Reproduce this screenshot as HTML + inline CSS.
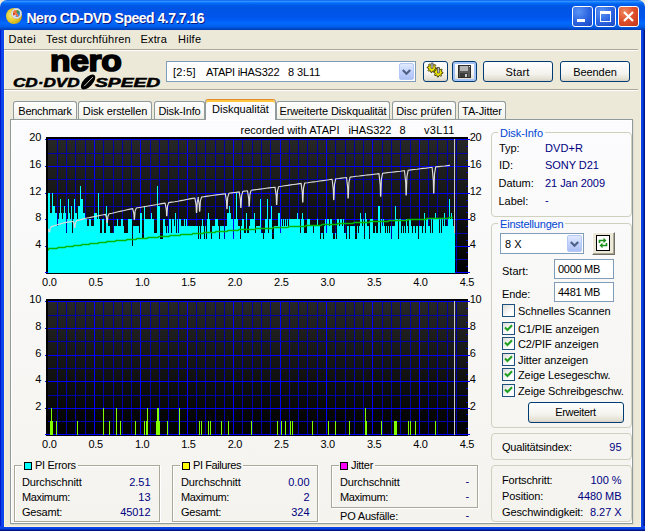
<!DOCTYPE html>
<html><head><meta charset="utf-8"><title>Nero CD-DVD Speed 4.7.7.16</title>
<style>
*{box-sizing:border-box;margin:0;padding:0}
html,body{width:645px;height:531px;overflow:hidden;background:#ece9d8}
body{position:relative;font-family:"Liberation Sans",sans-serif;font-size:11px;color:#000;letter-spacing:-0.3px}
.abs{position:absolute}
#win{position:absolute;left:0;top:0;width:645px;height:531px;background:#ece9d8;overflow:hidden}
#title{position:absolute;left:0;top:0;width:645px;height:30px;border-radius:7px 7px 0 0;
background:linear-gradient(to bottom,#0058ee 0%,#3593ff 4%,#288eff 6%,#127dff 8%,#036ffc 10%,#0262ee 14%,#0057e5 20%,#0054e3 24%,#0055eb 56%,#005bf5 66%,#026afe 76%,#0062ef 86%,#0056dc 92%,#0048c6 96%,#003cb0 100%)}
#title .txt{position:absolute;left:26.5px;top:10px;color:#fff;font-weight:bold;font-size:14px;letter-spacing:-0.5px;line-height:17px;text-shadow:1px 1px #0a1883;white-space:nowrap}
.bl{position:absolute;left:0;top:30px;width:5px;height:497px;background:linear-gradient(to right,#0019cf 0,#0019cf 1px,#0a3ee6 1px,#0c48ee 3px,#0a40e6 4px,#fbf3d8 4px)}
.br{position:absolute;left:640px;top:30px;width:5px;height:497px;background:linear-gradient(to right,#fbf3d8 0,#fbf3d8 1px,#0c44ea 1px,#0a40e6 3px,#002cbc 3px,#002cbc 4px,#001784 4px)}
.bb{position:absolute;left:0;top:526px;width:645px;height:5px;background:linear-gradient(to bottom,#fbf3d8 0,#fbf3d8 1px,#0c44ea 1px,#0a40e6 3px,#002cbc 3px,#002cbc 4px,#001784 4px)}
.bb:before{content:'';position:absolute;left:0;top:0;width:4px;height:1px;background:#0a3ee6}
.bb:after{content:'';position:absolute;right:0;top:0;width:4px;height:1px;background:#0a3ee6}
.cap{position:absolute;top:6px;width:21px;height:21px;border:1px solid #fff;border-radius:3px;background:radial-gradient(circle at 30% 25%,#5b93f5 0%,#2b63e0 55%,#1a48c0 100%)}
.cap.close{background:radial-gradient(circle at 30% 25%,#ee8a62 0%,#e0522c 45%,#c2341a 100%)}
#menu span{position:absolute;top:32px;font-size:11px;line-height:14px;letter-spacing:0;white-space:nowrap}
.sep{position:absolute;left:4px;width:634px;height:2px;border-top:1px solid #aca899;border-bottom:1px solid #fff}
.btn{position:absolute;border:1px solid #003c74;border-radius:3px;background:linear-gradient(to bottom,#fff 0%,#f4f3ee 60%,#e3e0d3 90%,#d6d0c5 100%);text-align:center;white-space:nowrap}
.combo{position:absolute;border:1px solid #7f9db9;background:#fff}
.dd{position:absolute;right:1px;top:1px;width:15px;bottom:1px;border-radius:2px;background:linear-gradient(to bottom,#e1eafe,#c3d3fd 50%,#aebff5);border:1px solid #b4c8f6}
.tab{position:absolute;top:101px;height:19px;border:1px solid #919b9c;border-bottom:none;border-radius:3px 3px 0 0;background:linear-gradient(to bottom,#fff,#f4f3ee 80%,#ebe9dd);text-align:center;line-height:18px;white-space:nowrap}
.tab.sel{top:99px;height:21px;background:#fcfcfe;border-top:1px solid #e68b2c;box-shadow:inset 0 2px 0 #ffc73c;line-height:19px;z-index:3}
#page{position:absolute;left:10px;top:119px;width:623px;height:405px;box-shadow:1px 1px 0 #e0ddcc,inset 1px 1px 0 #fff,inset -1px -1px 0 #fff;border:1px solid #919b9c;background:linear-gradient(to bottom,#fcfcfe,#f4f3ee)}
.grp{position:absolute;border:1px solid #d0d0bf;border-radius:4px}
.grp .lg{position:absolute;top:-7px;background:#f7f6f1;padding:0 2px;line-height:13px;white-space:nowrap}
.t{position:absolute;white-space:nowrap;line-height:13px}
.v{position:absolute;white-space:nowrap;line-height:13px;color:#000080;text-align:right;letter-spacing:-0.05px}
.blue{color:#0046d5}
.cb{position:absolute;width:13px;height:13px;border:1px solid #1c5180;background:linear-gradient(135deg,#dcdcd7,#fff 70%)}
.cb svg{position:absolute;left:1px;top:1px}
.sw{position:absolute;width:8px;height:8px;border:1px solid #000}
.charts{position:absolute;left:0;top:130px}
.lg2{font-weight:bold;font-style:italic;font-size:12.5px;line-height:14px;color:#000;white-space:nowrap;transform-origin:left top;letter-spacing:0;-webkit-text-stroke:0.5px #000}
.egrp{position:absolute;border:1px solid #aca899;box-shadow:1px 1px 0 #fff,inset 1px 1px 0 #fff}
.egrp .lg{position:absolute;top:-7px;background:#f5f4ef;padding:0 2px;line-height:13px;white-space:nowrap}
</style></head><body>
<div id="win">
<div id="title">
 <div class="abs" style="left:6px;top:8px;width:16px;height:16px;border-radius:50%;background:radial-gradient(circle at 35% 45%,#f4e878,#e4c828 45%,#c8a410 80%,#b08c08)"></div>
 <div class="abs" style="left:11px;top:8px;width:11px;height:11px;border-radius:50%;background:#e4e8ec;border:1px solid #c4c8d0"></div>
 <div class="abs" style="left:13px;top:10px;width:7px;height:7px;border-radius:50%;background:conic-gradient(from 20deg,#3c9a3c,#2e8cdc 25%,#2e8cdc 45%,#f0f0f0 55%,#c01808 65%,#e8c010 80%,#f07848 90%,#3c9a3c)"></div>
 <div class="abs" style="left:14.500px;top:10px;width:2px;height:7px;background:#f07048;transform:rotate(-35deg)"></div>
 <div class="txt">Nero CD-DVD Speed 4.7.7.16</div>
 <div class="cap" style="left:572px"><div class="abs" style="left:4px;top:12px;width:8px;height:3px;background:#fff"></div></div>
 <div class="cap" style="left:595px"><div class="abs" style="left:4px;top:4px;width:11px;height:11px;border:1px solid #fff;border-top-width:3px"></div></div>
 <div class="cap close" style="left:618px"><svg class="abs" style="left:3px;top:3px" width="13" height="13" viewBox="0 0 13 13"><path d="M2 2L11 11M11 2L2 11" stroke="#fff" stroke-width="2.2"/></svg></div>
</div>
<div class="bl"></div><div class="br"></div><div class="bb"></div>
<div id="menu">
 <span style="left:8.500px;letter-spacing:0.4px">Datei</span><span style="left:46px;letter-spacing:0.18px">Test durchführen</span><span style="left:140.500px;letter-spacing:0.15px">Extra</span><span style="left:178px;letter-spacing:0.25px">Hilfe</span>
</div>
<div class="sep" style="top:49px"></div>
<div class="sep" style="top:89px"></div>

<!-- logo -->
<div class="abs" style="left:50px;top:45px;font-weight:bold;font-size:29.500px;letter-spacing:-0.300px;line-height:32px;color:#000;-webkit-text-stroke:1.600px #000;transform-origin:left top;transform:scaleX(1.14)">nero</div>
<div class="abs lg2" style="left:13px;top:76px;transform:scaleX(1.37)">CD·DVD</div>
<div class="abs lg2" style="left:95px;top:76px;transform:scaleX(1.54)">SPEED</div>
<svg class="abs" style="left:78px;top:72px" width="20" height="20" viewBox="78 72 20 20"><ellipse cx="88.1" cy="82" rx="9.3" ry="4.5" transform="rotate(-46 88.1 82)" fill="#000"/><path d="M84.2 86.2L92.8 77.2" stroke="#ece9d8" stroke-width="0.9"/></svg>

<!-- toolbar -->
<div class="combo" style="left:166px;top:61px;width:250px;height:21px"><div class="t" style="left:6px;top:4px;letter-spacing:0.3px">[2:5]</div><div class="t" style="left:39px;top:4px;letter-spacing:-0.26px">ATAPI iHAS322</div><div class="t" style="left:121px;top:4px;letter-spacing:-0.1px">8 3L11</div><div class="dd"><svg class="abs" style="left:2px;top:5px" width="9" height="7" viewBox="0 0 9 7"><path d="M0.800 1L4.500 4.700L8.200 1" stroke="#4d6185" stroke-width="2.200" fill="none"/></svg></div></div>
<div class="btn" style="left:423px;top:61px;width:25px;height:21px"></div>
<svg class="abs" style="left:423px;top:61px" width="25" height="21" viewBox="423 61 25 21">
<g stroke="#3a3400" stroke-width="0.9" fill="#f0e800"><path d="M436.6 67.9L436.5 68.8L434.9 69.2L434.6 69.7L435.2 71.2L434.5 71.8L433.2 70.9L432.5 71.1L431.9 72.6L431.0 72.5L430.6 70.9L430.1 70.6L428.6 71.2L428.0 70.5L428.9 69.2L428.7 68.5L427.2 67.9L427.3 67.0L428.9 66.6L429.2 66.1L428.6 64.6L429.3 64.0L430.6 64.9L431.3 64.7L431.9 63.2L432.8 63.3L433.2 64.9L433.7 65.2L435.2 64.6L435.8 65.3L434.9 66.6L435.1 67.3Z"/><path d="M443.0 72.4L442.9 73.3L441.3 73.7L441.0 74.2L441.6 75.7L440.9 76.3L439.6 75.4L438.9 75.6L438.3 77.1L437.4 77.0L437.0 75.4L436.5 75.1L435.0 75.7L434.4 75.0L435.3 73.7L435.1 73.0L433.6 72.4L433.7 71.5L435.3 71.1L435.6 70.6L435.0 69.1L435.7 68.5L437.0 69.4L437.7 69.2L438.3 67.7L439.2 67.8L439.6 69.4L440.1 69.7L441.6 69.1L442.2 69.8L441.3 71.1L441.5 71.8Z"/></g>
<rect x="431" y="63" width="2" height="5.500" fill="#b8b8b8" stroke="#404040" stroke-width="0.6"/>
<rect x="437.400" y="67.500" width="2" height="5.500" fill="#b8b8b8" stroke="#404040" stroke-width="0.6"/>
</svg>
<div class="btn" style="left:452px;top:61px;width:25px;height:21px;box-shadow:inset 0 0 0 2px #a6c3f5"></div>
<svg class="abs" style="left:452px;top:61px" width="25" height="21" viewBox="452 61 25 21">
<rect x="458.500" y="65.500" width="12" height="12" fill="#5a5a5a" stroke="#2c2c2c"/>
<rect x="460" y="66" width="8" height="5" fill="#b4b4b4"/>
<rect x="460" y="73" width="8" height="4" fill="#3a3a3a"/>
<rect x="465" y="74" width="2" height="3" fill="#c8c8c8"/>
<rect x="469" y="66" width="1" height="1" fill="#e0e0e0"/>
</svg>
<div class="btn" style="left:483px;top:61px;width:70px;height:21px;line-height:21px;letter-spacing:0.2px;text-indent:-1px">Start</div>
<div class="btn" style="left:560px;top:61px;width:70px;height:21px;line-height:21px;letter-spacing:-0.1px">Beenden</div>

<!-- tabs -->
<div class="tab" style="left:13px;width:64px;letter-spacing:-0.25px">Benchmark</div><div class="tab" style="left:78px;width:74px;letter-spacing:-0.12px">Disk erstellen</div><div class="tab" style="left:154px;width:51px;letter-spacing:-0.15px">Disk-Info</div><div class="tab sel" style="left:205px;width:71px;letter-spacing:0px">Diskqualität</div><div class="tab" style="left:276px;width:114px;letter-spacing:-0.1px">Erweiterte Diskqualität</div><div class="tab" style="left:392px;width:64px;letter-spacing:0px">Disc prüfen</div><div class="tab" style="left:458px;width:48px;letter-spacing:-0.1px">TA-Jitter</div>
<div id="page"></div>
<div class="t" style="left:240.500px;top:124px;letter-spacing:0.02px">recorded with ATAPI</div><div class="t" style="left:348.500px;top:124px;letter-spacing:-0.1px">iHAS322</div><div class="t" style="left:399.500px;top:124px">8</div><div class="t" style="left:424px;top:124px;letter-spacing:0.3px">v3L11</div>
<svg class="charts" width="500" height="320" viewBox="0 130 500 320" shape-rendering="crispEdges">
<defs><linearGradient id="bg" x1="0" y1="0" x2="0" y2="1"><stop offset="0" stop-color="#272727"/><stop offset="1" stop-color="#000"/></linearGradient></defs>
<rect x="46" y="137" width="422" height="137" fill="#000"/><rect x="48" y="139" width="420" height="134" fill="url(#bg)"/>
<rect x="57" y="139" width="1" height="134" fill="#0000a6"/>
<rect x="66" y="139" width="1" height="134" fill="#0000a6"/>
<rect x="75" y="139" width="1" height="134" fill="#0000a6"/>
<rect x="85" y="139" width="1" height="134" fill="#0000a6"/>
<rect x="94" y="139" width="1" height="134" fill="#0000ff"/>
<rect x="103" y="139" width="1" height="134" fill="#0000a6"/>
<rect x="113" y="139" width="1" height="134" fill="#0000a6"/>
<rect x="122" y="139" width="1" height="134" fill="#0000a6"/>
<rect x="131" y="139" width="1" height="134" fill="#0000a6"/>
<rect x="140" y="139" width="1" height="134" fill="#0000ff"/>
<rect x="150" y="139" width="1" height="134" fill="#0000a6"/>
<rect x="159" y="139" width="1" height="134" fill="#0000a6"/>
<rect x="168" y="139" width="1" height="134" fill="#0000a6"/>
<rect x="178" y="139" width="1" height="134" fill="#0000a6"/>
<rect x="187" y="139" width="1" height="134" fill="#0000ff"/>
<rect x="196" y="139" width="1" height="134" fill="#0000a6"/>
<rect x="205" y="139" width="1" height="134" fill="#0000a6"/>
<rect x="215" y="139" width="1" height="134" fill="#0000a6"/>
<rect x="224" y="139" width="1" height="134" fill="#0000a6"/>
<rect x="233" y="139" width="1" height="134" fill="#0000ff"/>
<rect x="242" y="139" width="1" height="134" fill="#0000a6"/>
<rect x="252" y="139" width="1" height="134" fill="#0000a6"/>
<rect x="261" y="139" width="1" height="134" fill="#0000a6"/>
<rect x="270" y="139" width="1" height="134" fill="#0000a6"/>
<rect x="280" y="139" width="1" height="134" fill="#0000ff"/>
<rect x="289" y="139" width="1" height="134" fill="#0000a6"/>
<rect x="298" y="139" width="1" height="134" fill="#0000a6"/>
<rect x="307" y="139" width="1" height="134" fill="#0000a6"/>
<rect x="317" y="139" width="1" height="134" fill="#0000a6"/>
<rect x="326" y="139" width="1" height="134" fill="#0000ff"/>
<rect x="335" y="139" width="1" height="134" fill="#0000a6"/>
<rect x="345" y="139" width="1" height="134" fill="#0000a6"/>
<rect x="354" y="139" width="1" height="134" fill="#0000a6"/>
<rect x="363" y="139" width="1" height="134" fill="#0000a6"/>
<rect x="372" y="139" width="1" height="134" fill="#0000ff"/>
<rect x="382" y="139" width="1" height="134" fill="#0000a6"/>
<rect x="391" y="139" width="1" height="134" fill="#0000a6"/>
<rect x="400" y="139" width="1" height="134" fill="#0000a6"/>
<rect x="410" y="139" width="1" height="134" fill="#0000a6"/>
<rect x="419" y="139" width="1" height="134" fill="#0000ff"/>
<rect x="428" y="139" width="1" height="134" fill="#0000a6"/>
<rect x="437" y="139" width="1" height="134" fill="#0000a6"/>
<rect x="447" y="139" width="1" height="134" fill="#0000a6"/>
<rect x="456" y="139" width="1" height="134" fill="#0000a6"/>
<rect x="45" y="139" width="425" height="1" fill="#0000ff"/>
<rect x="48" y="153" width="420" height="1" fill="#0000a6"/>
<rect x="45" y="166" width="425" height="1" fill="#0000ff"/>
<rect x="48" y="179" width="420" height="1" fill="#0000a6"/>
<rect x="45" y="193" width="425" height="1" fill="#0000ff"/>
<rect x="48" y="206" width="420" height="1" fill="#0000a6"/>
<rect x="45" y="219" width="425" height="1" fill="#0000ff"/>
<rect x="48" y="233" width="420" height="1" fill="#0000a6"/>
<rect x="45" y="246" width="425" height="1" fill="#0000ff"/>
<rect x="48" y="259" width="420" height="1" fill="#0000a6"/>
<rect x="45" y="272" width="425" height="1" fill="#0000ff"/>
<rect x="466" y="146" width="2" height="1" fill="#0000c0"/>
<rect x="466" y="160" width="2" height="1" fill="#0000c0"/>
<rect x="466" y="172" width="2" height="1" fill="#0000c0"/>
<rect x="466" y="186" width="2" height="1" fill="#0000c0"/>
<rect x="466" y="200" width="2" height="1" fill="#0000c0"/>
<rect x="466" y="212" width="2" height="1" fill="#0000c0"/>
<rect x="466" y="226" width="2" height="1" fill="#0000c0"/>
<rect x="466" y="240" width="2" height="1" fill="#0000c0"/>
<rect x="466" y="252" width="2" height="1" fill="#0000c0"/>
<rect x="466" y="266" width="2" height="1" fill="#0000c0"/>
<rect x="454" y="139" width="1" height="134" fill="#c8c8c8"/>
<path d="M48 273V193H50V273ZM50 273V213H52V273ZM52 273V193H53V273ZM53 273V206H55V273ZM55 273V213H57V273ZM57 273V226H58V273ZM58 273V219H59V273ZM59 273V213H60V273ZM60 273V199H61V273ZM61 273V213H62V273ZM62 273V219H63V273ZM63 273V213H64V273ZM64 273V206H65V273ZM65 273V213H66V273ZM66 273V233H67V273ZM67 273V219H68V273ZM68 273V199H69V273ZM69 273V213H70V273ZM70 273V219H71V273ZM71 273V206H72V273ZM72 273V233H73V273ZM73 273V219H74V273ZM74 273V199H75V273ZM75 273V213H77V273ZM77 273V219H78V273ZM78 273V206H80V273ZM80 273V186H81V273ZM81 273V199H83V273ZM83 273V213H85V273ZM85 273V219H87V273ZM87 273V226H89V273ZM89 273V219H91V273ZM91 273V226H94V273ZM94 273V213H97V273ZM97 273V219H98V273ZM98 273V193H99V273ZM99 273V219H100V273ZM100 273V233H102V273ZM102 273V219H104V273ZM104 273V233H106V273ZM106 273V206H107V273ZM107 273V219H108V273ZM108 273V226H110V273ZM110 273V233H114V273ZM114 273V226H117V273ZM117 273V219H118V273ZM118 273V226H121V273ZM121 273V219H123V273ZM123 273V226H124V273ZM124 273V233H128V273ZM128 273V219H132V273ZM132 273V246H133V273ZM133 273V226H139V273ZM139 273V233H140V273ZM140 273V213H142V273ZM142 273V239H144V273ZM144 273V206H145V273ZM145 273V219H151V273ZM151 273V213H152V273ZM152 273V219H154V273ZM154 273V233H157V273ZM157 273V186H158V273ZM158 273V206H160V273ZM160 273V239H163V273ZM163 273V219H165V273ZM165 273V226H166V273ZM166 273V233H167V273ZM167 273V226H168V273ZM168 273V233H169V273ZM169 273V219H171V273ZM171 273V233H172V273ZM172 273V219H174V273ZM174 273V226H175V273ZM175 273V213H176V273ZM176 273V233H177V273ZM177 273V219H178V273ZM178 273V233H179V273ZM179 273V219H181V273ZM181 273V226H184V273ZM184 273V219H185V273ZM185 273V226H186V273ZM186 273V219H187V273ZM187 273V226H198V273ZM198 273V239H199V273ZM199 273V226H200V273ZM200 273V239H201V273ZM201 273V226H202V273ZM202 273V219H203V273ZM203 273V226H204V273ZM204 273V239H205V273ZM205 273V226H206V273ZM206 273V239H207V273ZM207 273V219H208V273ZM208 273V213H209V273ZM209 273V219H210V273ZM210 273V233H211V273ZM211 273V239H212V273ZM212 273V226H215V273ZM215 273V219H218V273ZM218 273V226H219V273ZM219 273V239H220V273ZM220 273V226H224V273ZM224 273V239H225V273ZM225 273V226H227V273ZM227 273V213H229V273ZM229 273V206H230V273ZM230 273V213H231V273ZM231 273V219H233V273ZM233 273V239H234V273ZM234 273V219H236V273ZM236 273V193H237V273ZM237 273V219H238V273ZM238 273V226H240V273ZM240 273V239H241V273ZM241 273V226H242V273ZM242 273V219H244V273ZM244 273V233H246V273ZM246 273V213H247V273ZM247 273V233H249V273ZM249 273V226H250V273ZM250 273V219H254V273ZM254 273V213H255V273ZM255 273V233H256V273ZM256 273V226H260V273ZM260 273V199H261V273ZM261 273V233H263V273ZM263 273V239H264V273ZM264 273V233H265V273ZM265 273V219H267V273ZM267 273V199H268V273ZM268 273V233H269V273ZM269 273V219H271V273ZM271 273V206H272V273ZM272 273V239H274V273ZM274 273V226H278V273ZM278 273V213H280V273ZM280 273V233H281V273ZM281 273V219H282V273ZM282 273V226H283V273ZM283 273V219H284V273ZM284 273V226H285V273ZM285 273V219H286V273ZM286 273V226H287V273ZM287 273V219H288V273ZM288 273V226H289V273ZM289 273V219H297V273ZM297 273V213H298V273ZM298 273V219H300V273ZM300 273V233H301V273ZM301 273V219H302V273ZM302 273V213H303V273ZM303 273V219H304V273ZM304 273V233H307V273ZM307 273V219H310V273ZM310 273V226H313V273ZM313 273V233H314V273ZM314 273V226H317V273ZM317 273V219H318V273ZM318 273V226H320V273ZM320 273V239H321V273ZM321 273V233H323V273ZM323 273V239H324V273ZM324 273V226H325V273ZM325 273V219H326V273ZM326 273V233H327V273ZM327 273V219H329V273ZM329 273V226H330V273ZM330 273V219H332V273ZM332 273V233H333V273ZM333 273V239H335V273ZM335 273V233H336V273ZM336 273V239H337V273ZM337 273V219H339V273ZM339 273V226H340V273ZM340 273V219H342V273ZM342 273V226H343V273ZM343 273V219H344V273ZM344 273V233H346V273ZM346 273V239H347V273ZM347 273V226H349V273ZM349 273V239H350V273ZM350 273V226H355V273ZM355 273V239H357V273ZM357 273V226H358V273ZM358 273V233H359V273ZM359 273V226H360V273ZM360 273V213H361V273ZM361 273V219H362V273ZM362 273V226H363V273ZM363 273V219H364V273ZM364 273V239H365V273ZM365 273V213H366V273ZM366 273V219H367V273ZM367 273V226H369V273ZM369 273V239H370V273ZM370 273V219H373V273ZM373 273V233H375V273ZM375 273V226H376V273ZM376 273V233H378V273ZM378 273V206H380V273ZM380 273V233H381V273ZM381 273V219H382V273ZM382 273V226H383V273ZM383 273V219H384V273ZM384 273V226H385V273ZM385 273V233H386V273ZM386 273V226H387V273ZM387 273V233H388V273ZM388 273V226H389V273ZM389 273V233H390V273ZM390 273V226H391V273ZM391 273V239H392V273ZM392 273V226H395V273ZM395 273V206H396V273ZM396 273V219H398V273ZM398 273V239H399V273ZM399 273V219H401V273ZM401 273V233H402V273ZM402 273V226H403V273ZM403 273V233H404V273ZM404 273V226H405V273ZM405 273V233H406V273ZM406 273V219H407V273ZM407 273V226H408V273ZM408 273V233H409V273ZM409 273V219H411V273ZM411 273V226H412V273ZM412 273V233H413V273ZM413 273V226H415V273ZM415 273V233H416V273ZM416 273V226H418V273ZM418 273V239H419V273ZM419 273V226H422V273ZM422 273V233H423V273ZM423 273V226H424V273ZM424 273V213H425V273ZM425 273V233H426V273ZM426 273V219H428V273ZM428 273V226H430V273ZM430 273V233H431V273ZM431 273V219H432V273ZM432 273V233H433V273ZM433 273V219H435V273ZM435 273V213H436V273ZM436 273V219H439V273ZM439 273V233H440V273ZM440 273V219H441V273ZM441 273V233H442V273ZM442 273V219H443V273ZM443 273V226H444V273ZM444 273V213H445V273ZM445 273V226H448V273ZM448 273V219H449V273ZM449 273V199H450V273ZM450 273V219H451V273ZM451 273V213H452V273ZM452 273V219H453V273ZM453 273V226H454V273ZM454 273V233H455V273Z" fill="#00ffff"/>
<path d="M48 250.5 L49 248.5 L50 248.5 L51 248.5 L52 248.5 L53 248.5 L54 248.5 L55 248.5 L56 248.5 L57 248.5 L58 247.5 L59 247.5 L60 247.5 L61 247.5 L62 247.5 L63 247.5 L64 247.5 L65 247.5 L66 246.5 L67 246.5 L68 246.5 L69 246.5 L70 246.5 L71 246.5 L72 246.5 L73 246.5 L74 245.5 L75 245.5 L76 245.5 L77 245.5 L78 245.5 L79 245.5 L80 245.5 L81 245.5 L82 244.5 L83 244.5 L84 244.5 L85 244.5 L86 244.5 L87 244.5 L88 244.5 L89 244.5 L90 243.5 L91 243.5 L92 243.5 L93 243.5 L94 243.5 L95 243.5 L96 243.5 L97 243.5 L98 243.5 L99 242.5 L100 242.5 L101 242.5 L102 242.5 L103 242.5 L104 242.5 L105 242.5 L106 242.5 L107 241.5 L108 241.5 L109 241.5 L110 241.5 L111 241.5 L112 241.5 L113 241.5 L114 241.5 L115 241.5 L116 240.5 L117 240.5 L118 240.5 L119 240.5 L120 240.5 L121 240.5 L122 240.5 L123 240.5 L124 240.5 L125 240.5 L126 240.5 L127 239.5 L128 239.5 L129 239.5 L130 239.5 L131 239.5 L132 239.5 L133 239.5 L134 239.5 L135 239.5 L136 239.5 L137 238.5 L138 238.5 L139 238.5 L140 238.5 L141 238.5 L142 238.5 L143 238.5 L144 238.5 L145 238.5 L146 238.5 L147 238.5 L148 237.5 L149 237.5 L150 237.5 L151 237.5 L152 237.5 L153 237.5 L154 237.5 L155 237.5 L156 237.5 L157 237.5 L158 237.5 L159 236.5 L160 236.5 L161 236.5 L162 236.5 L163 236.5 L164 236.5 L165 236.5 L166 236.5 L167 236.5 L168 236.5 L169 236.5 L170 235.5 L171 235.5 L172 235.5 L173 235.5 L174 235.5 L175 235.5 L176 235.5 L177 235.5 L178 235.5 L179 235.5 L180 235.5 L181 234.5 L182 234.5 L183 234.5 L184 234.5 L185 234.5 L186 234.5 L187 234.5 L188 234.5 L189 234.5 L190 234.5 L191 234.5 L192 234.5 L193 233.5 L194 233.5 L195 233.5 L196 233.5 L197 233.5 L198 233.5 L199 233.5 L200 233.5 L201 233.5 L202 233.5 L203 233.5 L204 232.5 L205 232.5 L206 232.5 L207 232.5 L208 232.5 L209 232.5 L210 232.5 L211 232.5 L212 232.5 L213 232.5 L214 232.5 L215 232.5 L216 231.5 L217 231.5 L218 231.5 L219 231.5 L220 231.5 L221 231.5 L222 231.5 L223 231.5 L224 231.5 L225 231.5 L226 231.5 L227 231.5 L228 230.5 L229 230.5 L230 230.5 L231 230.5 L232 230.5 L233 230.5 L234 230.5 L235 230.5 L236 230.5 L237 230.5 L238 230.5 L239 229.5 L240 229.5 L241 229.5 L242 229.5 L243 229.5 L244 229.5 L245 229.5 L246 229.5 L247 229.5 L248 229.5 L249 229.5 L250 229.5 L251 229.5 L252 229.5 L253 229.5 L254 229.5 L255 229.5 L256 228.5 L257 228.5 L258 228.5 L259 228.5 L260 228.5 L261 228.5 L262 228.5 L263 228.5 L264 228.5 L265 228.5 L266 228.5 L267 228.5 L268 228.5 L269 228.5 L270 228.5 L271 228.5 L272 228.5 L273 227.5 L274 227.5 L275 227.5 L276 227.5 L277 227.5 L278 227.5 L279 227.5 L280 227.5 L281 227.5 L282 227.5 L283 227.5 L284 227.5 L285 227.5 L286 227.5 L287 227.5 L288 227.5 L289 226.5 L290 226.5 L291 226.5 L292 226.5 L293 226.5 L294 226.5 L295 226.5 L296 226.5 L297 226.5 L298 226.5 L299 226.5 L300 226.5 L301 226.5 L302 226.5 L303 226.5 L304 226.5 L305 226.5 L306 225.5 L307 225.5 L308 225.5 L309 225.5 L310 225.5 L311 225.5 L312 225.5 L313 225.5 L314 225.5 L315 225.5 L316 225.5 L317 225.5 L318 225.5 L319 225.5 L320 225.5 L321 225.5 L322 224.5 L323 224.5 L324 224.5 L325 224.5 L326 224.5 L327 224.5 L328 224.5 L329 224.5 L330 224.5 L331 224.5 L332 224.5 L333 224.5 L334 224.5 L335 224.5 L336 224.5 L337 224.5 L338 223.5 L339 223.5 L340 223.5 L341 223.5 L342 223.5 L343 223.5 L344 223.5 L345 223.5 L346 223.5 L347 223.5 L348 223.5 L349 223.5 L350 223.5 L351 223.5 L352 223.5 L353 223.5 L354 222.5 L355 222.5 L356 222.5 L357 222.5 L358 222.5 L359 222.5 L360 222.5 L361 222.5 L362 222.5 L363 222.5 L364 222.5 L365 222.5 L366 222.5 L367 222.5 L368 222.5 L369 222.5 L370 221.5 L371 221.5 L372 221.5 L373 221.5 L374 221.5 L375 221.5 L376 221.5 L377 221.5 L378 221.5 L379 221.5 L380 221.5 L381 221.5 L382 221.5 L383 221.5 L384 221.5 L385 221.5 L386 221.5 L387 221.5 L388 221.5 L389 220.5 L390 220.5 L391 220.5 L392 220.5 L393 220.5 L394 220.5 L395 220.5 L396 220.5 L397 220.5 L398 220.5 L399 220.5 L400 220.5 L401 220.5 L402 220.5 L403 220.5 L404 220.5 L405 220.5 L406 220.5 L407 220.5 L408 219.5 L409 219.5 L410 219.5 L411 219.5 L412 219.5 L413 219.5 L414 219.5 L415 219.5 L416 219.5 L417 219.5 L418 219.5 L419 219.5 L420 219.5 L421 219.5 L422 219.5 L423 219.5 L424 219.5 L425 219.5 L426 219.5 L427 218.5 L428 218.5 L429 218.5 L430 218.5 L431 218.5 L432 218.5 L433 218.5 L434 218.5 L435 218.5 L436 218.5 L437 218.5 L438 218.5 L439 218.5 L440 218.5 L441 218.5 L442 218.5 L443 218.5 L444 218.5 L445 218.5 L446 218.5 L447 218.5 L448 218.5 L449 217.5 L450 217.5 L451 217.5 L452 217.5 L453 217.5" fill="none" stroke="#00b800" stroke-width="1.5" shape-rendering="auto"/>
<path d="M48.0 229.0 L49.0 231.9 L49.6 231.9 L50.2 228.5 L51.4 226.6 L54.4 225.7 L57.4 224.8 L60.4 223.9 L63.4 223.0 L66.4 222.4 L69.4 221.9 L72.4 221.5 L73.1 221.4 L74.3 224.3 L74.6 227.4 L74.9 227.4 L75.5 222.6 L76.7 220.6 L79.7 219.9 L82.7 219.1 L85.7 218.3 L88.7 217.7 L91.7 217.1 L94.7 216.5 L97.7 215.9 L100.7 215.3 L103.7 214.7 L105.5 214.4 L106.7 218.3 L107.0 222.4 L107.3 222.4 L107.9 216.2 L109.1 213.7 L112.1 213.2 L115.1 212.5 L118.1 211.8 L121.1 211.1 L124.1 210.5 L127.1 209.8 L130.1 209.1 L132.7 208.6 L133.9 213.8 L134.2 219.3 L134.5 219.3 L135.1 211.1 L136.3 208.0 L139.3 207.5 L142.3 207.0 L145.3 206.5 L148.3 206.0 L151.3 205.5 L154.3 205.0 L157.3 204.5 L160.3 203.9 L163.3 203.4 L165.1 203.1 L166.3 209.3 L166.6 215.6 L166.9 215.6 L167.5 206.1 L168.7 202.6 L171.7 202.1 L174.7 201.7 L177.7 201.2 L180.7 200.6 L183.7 200.1 L186.7 199.5 L189.7 198.9 L192.7 198.4 L194.9 198.0 L196.1 205.2 L196.4 212.5 L196.7 212.5 L197.3 201.5 L198.5 197.5 L198.0 197.6 L199.2 204.3 L199.5 211.2 L199.8 211.2 L200.4 200.8 L201.6 197.0 L204.6 196.6 L207.6 196.1 L210.6 195.7 L213.6 195.3 L216.6 194.9 L219.6 194.5 L222.6 194.1 L225.3 193.7 L226.5 201.1 L226.8 208.7 L227.1 208.7 L227.7 197.4 L228.9 193.3 L231.9 192.9 L234.9 192.5 L237.9 192.1 L239.2 191.9 L240.4 199.6 L240.7 207.5 L241.0 207.5 L241.6 195.7 L242.8 191.4 L245.8 191.0 L247.5 190.8 L248.7 198.4 L249.0 206.2 L249.3 206.2 L249.9 194.5 L251.1 190.3 L254.1 189.9 L257.1 189.5 L260.1 189.1 L263.1 188.7 L266.1 188.3 L269.1 187.9 L272.1 187.5 L275.0 187.2 L276.2 195.7 L276.5 204.4 L276.8 204.4 L277.4 191.4 L278.6 186.7 L281.6 186.3 L284.6 185.8 L287.6 185.4 L290.6 184.9 L293.6 184.5 L296.6 184.1 L299.6 183.6 L301.1 183.4 L302.3 192.6 L302.6 201.9 L302.9 201.9 L303.5 188.0 L304.7 183.0 L307.7 182.7 L310.7 182.3 L313.7 181.9 L316.7 181.5 L319.7 181.0 L322.7 180.6 L325.7 180.2 L328.7 179.8 L331.7 179.3 L332.1 179.3 L333.3 189.4 L333.6 199.6 L333.9 199.6 L334.5 184.3 L335.7 178.8 L338.7 178.5 L341.7 178.1 L344.7 177.7 L346.5 177.5 L347.7 187.7 L348.0 198.0 L348.3 198.0 L348.9 182.6 L350.1 177.1 L353.1 176.7 L356.1 176.3 L359.1 176.0 L362.1 175.6 L365.1 175.2 L368.1 174.9 L371.1 174.6 L374.1 174.2 L377.1 173.9 L379.0 173.6 L380.2 184.8 L380.5 196.2 L380.8 196.2 L381.4 179.3 L382.6 173.2 L385.6 172.9 L388.6 172.5 L391.6 172.2 L394.6 171.9 L397.6 171.5 L400.6 171.2 L403.6 170.8 L404.5 170.7 L405.7 182.8 L406.0 195.0 L406.3 195.0 L406.9 176.8 L408.1 170.3 L411.1 169.9 L414.1 169.5 L417.1 169.2 L420.1 168.8 L423.1 168.4 L426.1 168.1 L429.1 167.7 L432.1 167.3 L433.3 180.1 L433.6 193.0 L433.9 193.0 L434.5 173.8 L435.7 166.9 L438.7 166.6 L441.7 166.3 L444.7 166.0 L447.7 165.6 L450.0 165.4" fill="none" stroke="#dcdcdc" stroke-width="1.15" shape-rendering="auto" stroke-linejoin="round"/>
<rect x="46" y="273" width="422" height="1" fill="#000"/>
<rect x="46" y="137" width="2" height="137" fill="#000"/>
<rect x="45" y="272" width="3" height="1" fill="#0000ff"/><rect x="455" y="272" width="15" height="1" fill="#0000ff"/>

<rect x="46" y="299" width="422" height="137" fill="#000"/><rect x="48" y="301" width="420" height="134" fill="url(#bg)"/>
<rect x="57" y="301" width="1" height="134" fill="#0000a6"/>
<rect x="66" y="301" width="1" height="134" fill="#0000a6"/>
<rect x="75" y="301" width="1" height="134" fill="#0000a6"/>
<rect x="85" y="301" width="1" height="134" fill="#0000a6"/>
<rect x="94" y="301" width="1" height="134" fill="#0000ff"/>
<rect x="103" y="301" width="1" height="134" fill="#0000a6"/>
<rect x="113" y="301" width="1" height="134" fill="#0000a6"/>
<rect x="122" y="301" width="1" height="134" fill="#0000a6"/>
<rect x="131" y="301" width="1" height="134" fill="#0000a6"/>
<rect x="140" y="301" width="1" height="134" fill="#0000ff"/>
<rect x="150" y="301" width="1" height="134" fill="#0000a6"/>
<rect x="159" y="301" width="1" height="134" fill="#0000a6"/>
<rect x="168" y="301" width="1" height="134" fill="#0000a6"/>
<rect x="178" y="301" width="1" height="134" fill="#0000a6"/>
<rect x="187" y="301" width="1" height="134" fill="#0000ff"/>
<rect x="196" y="301" width="1" height="134" fill="#0000a6"/>
<rect x="205" y="301" width="1" height="134" fill="#0000a6"/>
<rect x="215" y="301" width="1" height="134" fill="#0000a6"/>
<rect x="224" y="301" width="1" height="134" fill="#0000a6"/>
<rect x="233" y="301" width="1" height="134" fill="#0000ff"/>
<rect x="242" y="301" width="1" height="134" fill="#0000a6"/>
<rect x="252" y="301" width="1" height="134" fill="#0000a6"/>
<rect x="261" y="301" width="1" height="134" fill="#0000a6"/>
<rect x="270" y="301" width="1" height="134" fill="#0000a6"/>
<rect x="280" y="301" width="1" height="134" fill="#0000ff"/>
<rect x="289" y="301" width="1" height="134" fill="#0000a6"/>
<rect x="298" y="301" width="1" height="134" fill="#0000a6"/>
<rect x="307" y="301" width="1" height="134" fill="#0000a6"/>
<rect x="317" y="301" width="1" height="134" fill="#0000a6"/>
<rect x="326" y="301" width="1" height="134" fill="#0000ff"/>
<rect x="335" y="301" width="1" height="134" fill="#0000a6"/>
<rect x="345" y="301" width="1" height="134" fill="#0000a6"/>
<rect x="354" y="301" width="1" height="134" fill="#0000a6"/>
<rect x="363" y="301" width="1" height="134" fill="#0000a6"/>
<rect x="372" y="301" width="1" height="134" fill="#0000ff"/>
<rect x="382" y="301" width="1" height="134" fill="#0000a6"/>
<rect x="391" y="301" width="1" height="134" fill="#0000a6"/>
<rect x="400" y="301" width="1" height="134" fill="#0000a6"/>
<rect x="410" y="301" width="1" height="134" fill="#0000a6"/>
<rect x="419" y="301" width="1" height="134" fill="#0000ff"/>
<rect x="428" y="301" width="1" height="134" fill="#0000a6"/>
<rect x="437" y="301" width="1" height="134" fill="#0000a6"/>
<rect x="447" y="301" width="1" height="134" fill="#0000a6"/>
<rect x="456" y="301" width="1" height="134" fill="#0000a6"/>
<rect x="45" y="301" width="425" height="1" fill="#0000ff"/>
<rect x="48" y="315" width="420" height="1" fill="#0000a6"/>
<rect x="45" y="328" width="425" height="1" fill="#0000ff"/>
<rect x="48" y="341" width="420" height="1" fill="#0000a6"/>
<rect x="45" y="355" width="425" height="1" fill="#0000ff"/>
<rect x="48" y="368" width="420" height="1" fill="#0000a6"/>
<rect x="45" y="381" width="425" height="1" fill="#0000ff"/>
<rect x="48" y="395" width="420" height="1" fill="#0000a6"/>
<rect x="45" y="408" width="425" height="1" fill="#0000ff"/>
<rect x="48" y="421" width="420" height="1" fill="#0000a6"/>
<rect x="45" y="434" width="425" height="1" fill="#0000ff"/>
<rect x="466" y="308" width="2" height="1" fill="#0000c0"/>
<rect x="466" y="322" width="2" height="1" fill="#0000c0"/>
<rect x="466" y="334" width="2" height="1" fill="#0000c0"/>
<rect x="466" y="348" width="2" height="1" fill="#0000c0"/>
<rect x="466" y="362" width="2" height="1" fill="#0000c0"/>
<rect x="466" y="374" width="2" height="1" fill="#0000c0"/>
<rect x="466" y="388" width="2" height="1" fill="#0000c0"/>
<rect x="466" y="402" width="2" height="1" fill="#0000c0"/>
<rect x="466" y="414" width="2" height="1" fill="#0000c0"/>
<rect x="466" y="428" width="2" height="1" fill="#0000c0"/>
<rect x="454" y="301" width="1" height="134" fill="#c8c8c8"/>
<path d="M50 435V421h1V435ZM51 435V421h1V435ZM52 435V421h1V435ZM56 435V421h1V435ZM77 435V421h1V435ZM109 435V421h1V435ZM120 435V421h1V435ZM135 435V421h1V435ZM144 435V421h1V435ZM146 435V421h1V435ZM147 435V421h1V435ZM156 435V421h1V435ZM157 435V421h1V435ZM158 435V421h1V435ZM159 435V421h1V435ZM167 435V421h1V435ZM199 435V421h1V435ZM201 435V421h1V435ZM208 435V421h1V435ZM210 435V421h1V435ZM221 435V421h1V435ZM228 435V421h1V435ZM251 435V421h1V435ZM277 435V421h1V435ZM281 435V421h1V435ZM285 435V421h1V435ZM290 435V421h1V435ZM292 435V421h1V435ZM312 435V421h1V435ZM328 435V421h1V435ZM335 435V421h1V435ZM349 435V421h1V435ZM365 435V421h1V435ZM366 435V421h1V435ZM381 435V421h1V435ZM394 435V421h1V435ZM395 435V421h1V435ZM396 435V421h1V435ZM408 435V421h1V435ZM410 435V421h1V435ZM415 435V421h1V435ZM435 435V421h1V435ZM51 435V408h1V435ZM103 435V408h1V435ZM116 435V408h1V435ZM147 435V408h1V435ZM157 435V408h1V435ZM158 435V408h1V435ZM179 435V408h1V435ZM365 435V408h1V435Z" fill="#80ff00"/>
<rect x="46" y="435" width="422" height="1" fill="#000"/>
<rect x="46" y="299" width="2" height="137" fill="#000"/>
<rect x="45" y="434" width="3" height="1" fill="#0000ff"/><rect x="455" y="434" width="15" height="1" fill="#0000ff"/>
<g font-family="Liberation Sans, sans-serif" font-size="11" fill="#000" shape-rendering="auto">
<text x="41" y="141.1" text-anchor="end">20</text><text x="41" y="168.1" text-anchor="end">16</text><text x="41" y="195.1" text-anchor="end">12</text><text x="41" y="221.1" text-anchor="end">8</text><text x="41" y="248.1" text-anchor="end">4</text>
<text x="469.8" y="141.1">20</text><text x="469.8" y="168.1">16</text><text x="469.8" y="195.1">12</text><text x="469.8" y="221.1">8</text><text x="469.8" y="248.1">4</text>
<text x="49.3" y="285.5" text-anchor="middle">0.0</text><text x="95.7" y="285.5" text-anchor="middle">0.5</text><text x="142.1" y="285.5" text-anchor="middle">1.0</text><text x="188.5" y="285.5" text-anchor="middle">1.5</text><text x="234.9" y="285.5" text-anchor="middle">2.0</text><text x="281.3" y="285.5" text-anchor="middle">2.5</text><text x="327.7" y="285.5" text-anchor="middle">3.0</text><text x="374.1" y="285.5" text-anchor="middle">3.5</text><text x="420.5" y="285.5" text-anchor="middle">4.0</text><text x="466.9" y="285.5" text-anchor="middle">4.5</text>
<text x="41" y="303.1" text-anchor="end">10</text><text x="41" y="330.1" text-anchor="end">8</text><text x="41" y="357.1" text-anchor="end">6</text><text x="41" y="383.1" text-anchor="end">4</text><text x="41" y="410.1" text-anchor="end">2</text>
<text x="469.8" y="303.1">10</text><text x="469.8" y="330.1">8</text><text x="469.8" y="357.1">6</text><text x="469.8" y="383.1">4</text><text x="469.8" y="410.1">2</text>
<text x="49.3" y="447.5" text-anchor="middle">0.0</text><text x="95.7" y="447.5" text-anchor="middle">0.5</text><text x="142.1" y="447.5" text-anchor="middle">1.0</text><text x="188.5" y="447.5" text-anchor="middle">1.5</text><text x="234.9" y="447.5" text-anchor="middle">2.0</text><text x="281.3" y="447.5" text-anchor="middle">2.5</text><text x="327.7" y="447.5" text-anchor="middle">3.0</text><text x="374.1" y="447.5" text-anchor="middle">3.5</text><text x="420.5" y="447.5" text-anchor="middle">4.0</text><text x="466.9" y="447.5" text-anchor="middle">4.5</text>
</g>
</svg>

<!-- right panel -->
<div class="grp" style="left:491px;top:132px;width:141px;height:85px"><div class="lg blue" style="left:6px;top:-6px;letter-spacing:-0.05px;background:#fcfcfd">Disk-Info</div></div>
<div class="t" style="left:499px;top:142px;letter-spacing:-0.1px">Typ:</div><div class="v" style="right:645px;top:142px"></div><div class="t" style="left:499px;top:159px;letter-spacing:0px">ID:</div><div class="v" style="right:645px;top:159px"></div><div class="t" style="left:498.5px;top:177px;letter-spacing:-0.05px">Datum:</div><div class="v" style="right:645px;top:177px"></div><div class="t" style="left:498.5px;top:195px;letter-spacing:-0.05px">Label:</div><div class="v" style="right:645px;top:195px"></div>
<div class="v" style="left:545px;top:142px;letter-spacing:0.1px">DVD+R</div><div class="v" style="left:545px;top:159px;letter-spacing:-0.05px">SONY D21</div><div class="v" style="left:545px;top:177px;letter-spacing:-0.05px">21 Jan 2009</div><div class="v" style="left:545px;top:194px">-</div>
<div class="grp" style="left:491px;top:223px;width:141px;height:205px"><div class="lg blue" style="left:6px;top:-6px;letter-spacing:-0.2px;background:#fafafa">Einstellungen</div></div>
<div class="combo" style="left:500px;top:233px;width:84px;height:21px"><div class="t" style="left:4px;top:4px;letter-spacing:0">8 X</div><div class="dd"><svg class="abs" style="left:2px;top:5px" width="9" height="7" viewBox="0 0 9 7"><path d="M0.800 1L4.500 4.700L8.200 1" stroke="#4d6185" stroke-width="2.200" fill="none"/></svg></div></div>
<div class="abs" style="left:592px;top:232px;width:23px;height:23px;border:1px solid;border-color:#fff #716f64 #716f64 #fff;background:#ece9d8;box-shadow:inset -1px -1px #aca899"><div class="abs" style="left:3px;top:2px;width:14px;height:16px;border:1px solid #000;background:#fff"><svg class="abs" style="left:1px;top:1px" width="10" height="12" viewBox="0 0 10 12"><path d="M1.5 6V3.5H6" stroke="#189018" stroke-width="1.6" fill="none"/><path d="M5.5 0.8L8.5 3.5L5.5 6.2Z" fill="#189018"/><path d="M8.5 6V8.5H4" stroke="#189018" stroke-width="1.6" fill="none"/><path d="M4.5 5.8L1.5 8.5L4.5 11.2Z" fill="#189018"/></svg></div></div>
<div class="t" style="left:502px;top:265px;letter-spacing:0">Start:</div><div class="combo" style="left:554px;top:259px;width:60px;height:20px"><div class="t" style="left:3px;top:3px">0000 MB</div></div>
<div class="t" style="left:502px;top:288px;letter-spacing:-0.1px">Ende:</div><div class="combo" style="left:554px;top:282px;width:60px;height:20px"><div class="t" style="left:3px;top:3px">4481 MB</div></div>
<div class="cb" style="left:502px;top:304px"></div><div class="t" style="left:518px;top:305px;letter-spacing:-0.1px">Schnelles Scannen</div><div class="cb" style="left:502px;top:322px"><svg width="9" height="9" viewBox="0 0 9 9"><path d="M1 3.5L3.5 6L8 1.2" stroke="#21a121" stroke-width="2" fill="none"/></svg></div><div class="t" style="left:518px;top:323px;letter-spacing:-0.1px">C1/PIE anzeigen</div><div class="cb" style="left:502px;top:337px"><svg width="9" height="9" viewBox="0 0 9 9"><path d="M1 3.5L3.5 6L8 1.2" stroke="#21a121" stroke-width="2" fill="none"/></svg></div><div class="t" style="left:518px;top:338px;letter-spacing:-0.1px">C2/PIF anzeigen</div><div class="cb" style="left:502px;top:353px"><svg width="9" height="9" viewBox="0 0 9 9"><path d="M1 3.5L3.5 6L8 1.2" stroke="#21a121" stroke-width="2" fill="none"/></svg></div><div class="t" style="left:518px;top:354px;letter-spacing:-0.1px">Jitter anzeigen</div><div class="cb" style="left:502px;top:368px"><svg width="9" height="9" viewBox="0 0 9 9"><path d="M1 3.5L3.5 6L8 1.2" stroke="#21a121" stroke-width="2" fill="none"/></svg></div><div class="t" style="left:518px;top:369px;letter-spacing:-0.1px">Zeige Lesegeschw.</div><div class="cb" style="left:502px;top:384px"><svg width="9" height="9" viewBox="0 0 9 9"><path d="M1 3.5L3.5 6L8 1.2" stroke="#21a121" stroke-width="2" fill="none"/></svg></div><div class="t" style="left:518px;top:385px;letter-spacing:-0.1px">Zeige Schreibgeschw.</div>
<div class="btn" style="left:528px;top:402px;width:96px;height:21px;line-height:19px;letter-spacing:-0.3px;text-indent:-1px">Erweitert</div>
<div class="grp" style="left:491px;top:433px;width:141px;height:27px"></div>
<div class="t" style="left:502px;top:441px;letter-spacing:-0.2px">Qualitätsindex:</div><div class="v" style="right:23.5px;top:441px">95</div>
<div class="grp" style="left:491px;top:465px;width:141px;height:57px"></div>
<div class="t" style="left:502px;top:474px;letter-spacing:-0.12px">Fortschritt:</div><div class="v" style="right:23.5px;top:474px">100 %</div><div class="t" style="left:502px;top:490px;letter-spacing:-0.1px">Position:</div><div class="v" style="right:23.5px;top:490px">4480 MB</div><div class="t" style="left:502px;top:506px;letter-spacing:-0.12px">Geschwindigkeit:</div><div class="v" style="right:23.5px;top:506px">8.27 X</div>

<!-- bottom groups -->
<div class="egrp" style="left:14px;top:465px;width:146px;height:57px"><div class="lg" style="left:7px;padding-left:13px">PI Errors</div></div>
<div class="sw" style="left:24px;top:462px;background:#00ffff"></div>
<div class="t" style="left:22px;top:476px;letter-spacing:-0.12px">Durchschnitt</div><div class="v" style="right:494.5px;top:476px">2.51</div><div class="t" style="left:22px;top:491px;letter-spacing:-0.35px">Maximum:</div><div class="v" style="right:494.5px;top:491px">13</div><div class="t" style="left:22px;top:506px;letter-spacing:-0.2px">Gesamt:</div><div class="v" style="right:494.5px;top:506px">45012</div>
<div class="egrp" style="left:172px;top:465px;width:146px;height:57px"><div class="lg" style="left:7px;padding-left:13px;letter-spacing:-0.4px">PI Failures</div></div>
<div class="sw" style="left:182px;top:462px;background:#ffff00"></div>
<div class="t" style="left:181px;top:476px;letter-spacing:-0.12px">Durchschnitt</div><div class="v" style="right:335.5px;top:476px">0.00</div><div class="t" style="left:181px;top:491px;letter-spacing:-0.35px">Maximum:</div><div class="v" style="right:335.5px;top:491px">2</div><div class="t" style="left:181px;top:506px;letter-spacing:-0.2px">Gesamt:</div><div class="v" style="right:335.5px;top:506px">324</div>
<div class="egrp" style="left:331px;top:465px;width:147px;height:43px"><div class="lg" style="left:7px;padding-left:12px">Jitter</div></div>
<div class="sw" style="left:340px;top:462px;background:#ff00ff"></div>
<div class="t" style="left:340px;top:476px;letter-spacing:-0.12px">Durchschnitt</div><div class="v" style="right:176px;top:476px"></div><div class="t" style="left:340px;top:491px;letter-spacing:-0.35px">Maximum:</div><div class="v" style="right:176px;top:491px"></div><div class="t" style="left:340px;top:510px;letter-spacing:-0.2px">PO Ausfälle:</div><div class="v" style="right:176px;top:510px"></div><div class="v" style="right:176px;top:475px">-</div><div class="v" style="right:176px;top:490px">-</div><div class="v" style="right:176px;top:509px">-</div>
</div>
</body></html>
